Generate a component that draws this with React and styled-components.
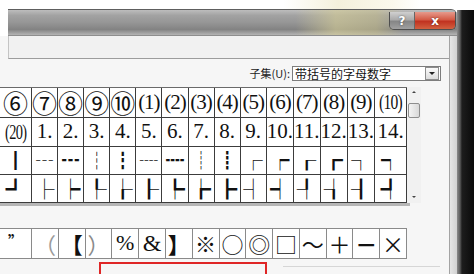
import React from 'react'
import styled, { createGlobalStyle } from 'styled-components'

const GlobalStyle = createGlobalStyle`
  html, body {
    margin: 0;
    padding: 0;
    background: #fff;
  }
  body {
    font-family: "Noto Sans CJK SC", "Liberation Sans", sans-serif;
  }
`

const Page = styled.div`
  display: flex;
  width: 474px;
  height: 274px;
  overflow: hidden;
  background: #fff;
`

const Window = styled.div`
  display: flex;
  flex-direction: column;
  width: 457px;
  flex-shrink: 0;
`

const TopGap = styled.div`
  height: 11px;
  background: linear-gradient(to right, #fff 62%, #f4f0dc 74%, #fbf8ec 86%, #fff 92%);
`

const TitleBar = styled.div`
  margin-left: 8px;
  height: 31px;
  box-sizing: border-box;
  border-top: 1px solid #5e5e5e;
  border-bottom: 1px solid #8e8e8e;
  border-top-right-radius: 6px;
  display: flex;
  justify-content: flex-end;
  align-items: flex-start;
  padding-right: 1px;
  background:
    linear-gradient(to right, rgba(255,255,255,0) 0%, rgba(255,255,255,0) 64%, rgba(214,206,150,0.6) 73%, rgba(200,192,140,0.55) 82%, rgba(255,255,255,0) 88%),
    linear-gradient(to bottom, #bdbdbd 0%, #a2a2a2 22%, #969696 50%, #838383 78%, #b4b4b4 100%);
`

const CaptionButtons = styled.div`
  display: flex;
  margin-top: 2px;
  height: 17px;
  border: 1px solid #4e4e4e;
  border-top: none;
  border-radius: 0 0 5px 5px;
  overflow: hidden;
`

const CaptionButton = styled.div`
  width: ${p => p.$w}px;
  display: flex;
  align-items: center;
  justify-content: center;
  color: #fff;
  font: bold 12px "DejaVu Sans", sans-serif;
  text-shadow: 0 0 2px rgba(0,0,0,0.6);
  background: ${p => p.$close
    ? 'linear-gradient(to bottom, #e69a8c 0%, #d45b46 45%, #c13220 55%, #d2603f 100%)'
    : 'linear-gradient(to bottom, #d0d0d0 0%, #ababab 45%, #868686 55%, #a0a0a0 100%)'};
  & + & {
    border-left: 1px solid #666;
  }
`

const Frame = styled.div`
  display: flex;
  flex: 1;
`

const Client = styled.div`
  width: 449px;
  display: flex;
  flex-direction: column;
  background: #f6f6f6;
`

const FrameEdge = styled.div`
  width: 7px;
  border-left: 1px solid #a3a3a3;
  background: linear-gradient(to right, #e6e6e6, #d2d2d2);
`

const TopBand = styled.div`
  margin-left: 8px;
  height: 22px;
  background: #f1f1f1;
  border-left: 1px solid #c4c4c4;
  border-bottom: 1px solid #9c9c9c;
`

const Body = styled.div`
  display: flex;
  flex-direction: column;
  padding-top: 6px;
`

const SubsetRow = styled.div`
  display: flex;
  justify-content: flex-end;
  align-items: center;
  gap: 2px;
  height: 16px;
  padding-right: 8px;
`

const Label = styled.span`
  font: 11px "Noto Sans CJK SC", sans-serif;
  color: #222;
`

const Combo = styled.div`
  width: 149px;
  height: 15px;
  box-sizing: border-box;
  border: 1px solid #7d7d7d;
  background: #fff;
  display: flex;
  align-items: center;
  padding-left: 2px;
  font: 12px "Noto Sans CJK SC", sans-serif;
  color: #111;
`

const DropButton = styled.div`
  margin-left: auto;
  margin-right: 1px;
  width: 12px;
  height: 11px;
  border: 1px solid #8c8c8c;
  background: linear-gradient(#fafafa, #dcdcdc);
  display: flex;
  align-items: center;
  justify-content: center;
  &::after {
    content: '';
    border-left: 3px solid transparent;
    border-right: 3px solid transparent;
    border-top: 3px solid #222;
  }
`

const CharArea = styled.div`
  display: flex;
  margin-top: 6px;
`

const Grid = styled.div`
  display: grid;
  width: 407px;
  grid-template-columns: 32px repeat(14, 1fr);
  grid-template-rows: 30px 29px 28px 28px;
  border-top: 1px solid #6a6a6a;
  background: #fff;
`

const Cell = styled.div`
  box-sizing: border-box;
  border-right: 1px solid #3c3c3c;
  border-bottom: 1px solid #3c3c3c;
  display: flex;
  align-items: center;
  justify-content: center;
  white-space: nowrap;
  color: #111;
`

const Glyph = styled.span`
  display: block;
  font-family: ${p => p.$serif ? '"Liberation Serif", "Noto Sans CJK SC", serif' : '"Noto Sans CJK SC", sans-serif'};
  font-size: ${p => p.$size}px;
  line-height: 1.1;
  letter-spacing: ${p => p.$tight ? '-1px' : '0'};
  transform: ${p => p.$squeeze ? `scaleX(${p.$squeeze})` : 'none'};
  color: ${p => p.$color || '#111'};
  font-weight: ${p => p.$bold ? 700 : 400};
`

const Scrollbar = styled.div`
  width: 14px;
  height: 116px;
  display: flex;
  flex-direction: column;
  align-items: center;
  background: #f1f1f1;
`

const Arrow = styled.div`
  margin-top: ${p => p.$down ? 'auto' : '4px'};
  margin-bottom: ${p => p.$down ? '5px' : '0'};
  border-left: 2px solid transparent;
  border-right: 2px solid transparent;
  ${p => p.$down ? 'border-top: 2px solid #444;' : 'border-bottom: 2px solid #444;'}
`

const Thumb = styled.div`
  margin-top: 10px;
  width: 12px;
  height: 15px;
  box-sizing: border-box;
  border: 1px solid #8e8e8e;
  border-radius: 2px;
  background: linear-gradient(to right, #f4f4f4, #d9d9d9);
`

const Shadow = styled.div`
  width: 410px;
  height: 3px;
  background: #b6b6b6;
`

const RecentRow = styled.div`
  display: grid;
  width: 407px;
  margin-top: 22px;
  grid-template-columns: 32px repeat(14, 1fr);
  grid-template-rows: 30px;
  border-top: 1px solid #8a8a8a;
  background: #fff;
`

const RecentCell = styled(Cell)`
  border-color: #8a8a8a;
  align-items: ${p => p.$top ? 'flex-start' : 'center'};
  padding-top: ${p => p.$top ? '4px' : '0'};
`

const BottomRow = styled.div`
  display: flex;
  align-items: flex-start;
  margin-top: 3px;
`

const RedBox = styled.div`
  margin-left: 99px;
  width: 168px;
  height: 12px;
  box-sizing: border-box;
  border: 2px solid #df2626;
  border-bottom: none;
`

const GhostBox = styled.div`
  margin-left: 16px;
  margin-top: 4px;
  width: 157px;
  height: 6px;
  border-top: 1px solid #d6d6d6;
`

const DarkEdge = styled.div`
  width: 17px;
  margin-top: 10px;
  background: linear-gradient(to right, #8c8c8c 0, #5b5b5b 3px, #1d1d1d 5px, #0a0a0a 100%);
`

const circ = ['⑥', '⑦', '⑧', '⑨', '⑩']
const paren = ['(1)', '(2)', '(3)', '(4)', '(5)', '(6)', '(7)', '(8)', '(9)']
const nums = Array.from({ length: 14 }, (_, i) => `${i + 1}.`)
const boxRow1 = ['┃', '┄', '┅', '┆', '┇', '┈', '┉', '┊', '┋', '┌', '┍', '┎', '┏', '┐', '┑']
const boxRow2 = ['┛', '├', '┝', '┞', '┟', '┠', '┡', '┢', '┣', '┤', '┥', '┦', '┧', '┨', '┩']

const recent = [
  { c: '”', size: 15, top: true, bold: true },
  { c: '（', size: 22, color: '#9a9a9a' },
  { c: '【', size: 22, bold: true },
  { c: '）', size: 22, color: '#8a8a8a' },
  { c: '%', size: 22, serif: true },
  { c: '&', size: 24, serif: true },
  { c: '】', size: 22, bold: true },
  { c: '※', size: 21 },
  { c: '○', size: 22 },
  { c: '◎', size: 22 },
  { c: '□', size: 22 },
  { c: '～', size: 22 },
  { c: '＋', size: 22 },
  { c: '－', size: 22, bold: true },
  { c: '×', size: 22 },
]

function App() {
  return (
    <Page>
      <GlobalStyle />
      <Window>
        <TopGap />
        <TitleBar>
          <CaptionButtons>
            <CaptionButton $w={24}>?</CaptionButton>
            <CaptionButton $w={40} $close>x</CaptionButton>
          </CaptionButtons>
        </TitleBar>
        <Frame>
          <Client>
            <TopBand />
            <Body>
              <SubsetRow>
                <Label>子集(U):</Label>
                <Combo>
                  带括号的字母数字
                  <DropButton />
                </Combo>
              </SubsetRow>

              <CharArea>
                <Grid>
                  {circ.map(c => (
                    <Cell key={c}><Glyph $size={25}>{c}</Glyph></Cell>
                  ))}
                  {paren.map(c => (
                    <Cell key={c}><Glyph $serif $size={21} $tight>{c}</Glyph></Cell>
                  ))}
                  <Cell><Glyph $serif $size={21} $tight $squeeze={0.74}>(10)</Glyph></Cell>

                  <Cell><Glyph $serif $size={20} $tight $squeeze={0.72}>(20)</Glyph></Cell>
                  {nums.map(c => (
                    <Cell key={c}><Glyph $serif $size={21}>{c}</Glyph></Cell>
                  ))}

                  {boxRow1.map(c => (
                    <Cell key={c}><Glyph $size={19}>{c}</Glyph></Cell>
                  ))}
                  {boxRow2.map(c => (
                    <Cell key={c}><Glyph $size={20}>{c}</Glyph></Cell>
                  ))}
                </Grid>
                <Scrollbar>
                  <Arrow />
                  <Thumb />
                  <Arrow $down />
                </Scrollbar>
              </CharArea>
              <Shadow />

              <RecentRow>
                {recent.map(r => (
                  <RecentCell key={r.c} $top={r.top}>
                    <Glyph $size={r.size} $serif={r.serif} $bold={r.bold} $color={r.color}>{r.c}</Glyph>
                  </RecentCell>
                ))}
              </RecentRow>

              <BottomRow>
                <RedBox />
                <GhostBox />
              </BottomRow>
            </Body>
          </Client>
          <FrameEdge />
        </Frame>
      </Window>
      <DarkEdge />
    </Page>
  )
}

export default App
